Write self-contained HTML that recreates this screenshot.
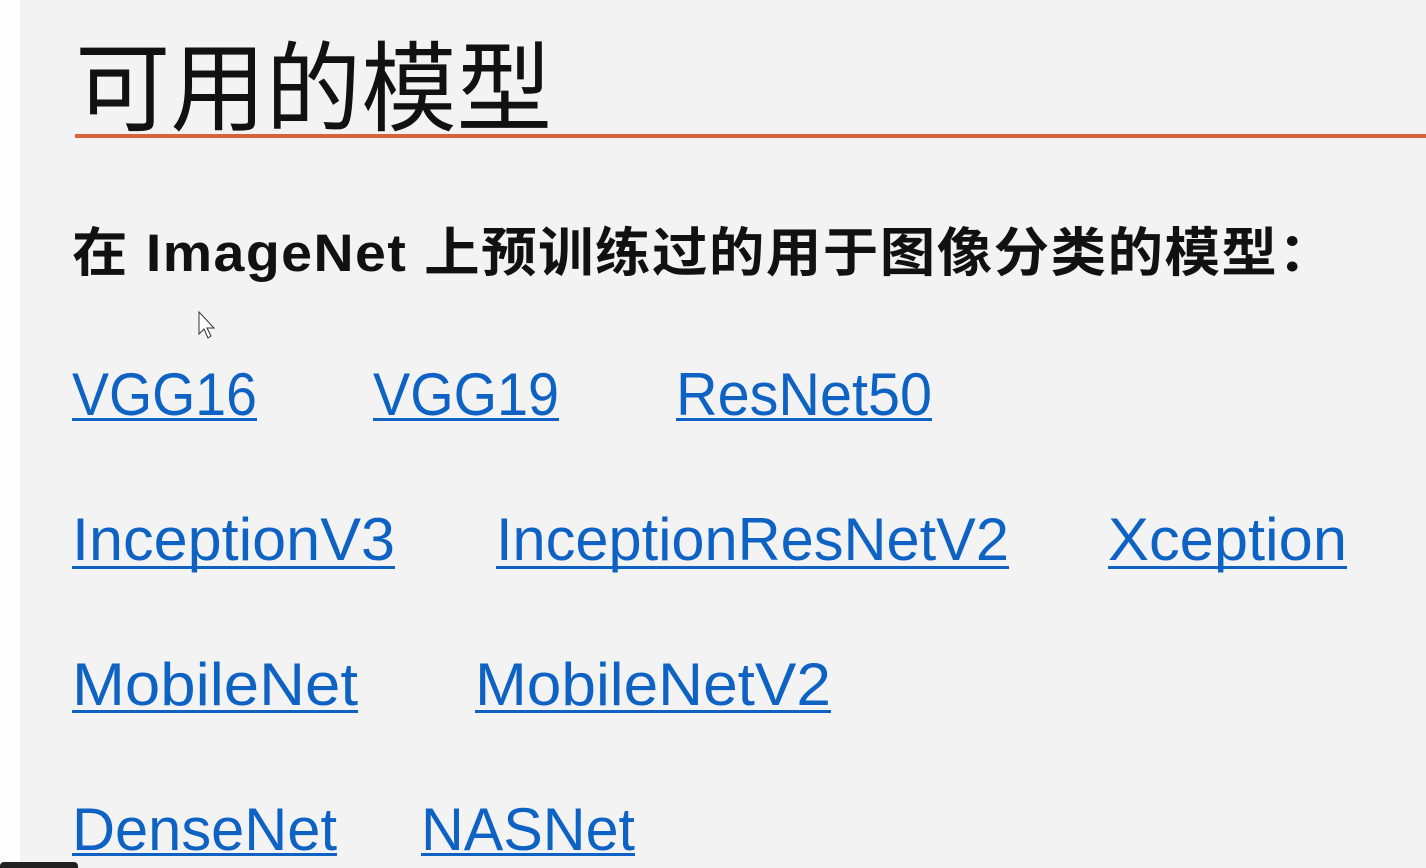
<!DOCTYPE html>
<html><head><meta charset="utf-8"><style>
html,body{margin:0;padding:0;width:1426px;height:868px;overflow:hidden;background:#f3f3f3}
svg{display:block}
</style></head><body>
<svg width="1426" height="868" xmlns="http://www.w3.org/2000/svg">
<rect x="0" y="0" width="20" height="868" fill="#fdfdfd"/>
<text x="75" y="123" font-family="Noto Sans CJK SC, sans-serif" font-weight="400" font-size="98" fill="#111" textLength="477" lengthAdjust="spacingAndGlyphs">可用的模型</text>
<rect x="75" y="134" width="1351" height="4" fill="#d9623e"/>
<g transform="translate(72,0) scale(1.047,1) translate(-72,0)">
<text x="72" y="271" font-family="Liberation Sans, Noto Sans CJK SC, sans-serif" font-weight="bold" font-size="53" fill="#111" letter-spacing="1.4">在 ImageNet 上预训练过的用于图像分类的模型：</text>
</g>
<g font-family="Liberation Sans, sans-serif" font-size="60" fill="#0e62c4">
<text x="72" y="415" textLength="185" lengthAdjust="spacingAndGlyphs">VGG16</text>
<text x="373" y="415" textLength="186" lengthAdjust="spacingAndGlyphs">VGG19</text>
<text x="676" y="415" textLength="256" lengthAdjust="spacingAndGlyphs">ResNet50</text>
<text x="72" y="560" textLength="323" lengthAdjust="spacingAndGlyphs">InceptionV3</text>
<text x="496" y="560" textLength="513" lengthAdjust="spacingAndGlyphs">InceptionResNetV2</text>
<text x="1108" y="560" textLength="239" lengthAdjust="spacingAndGlyphs">Xception</text>
<text x="72" y="705" textLength="286" lengthAdjust="spacingAndGlyphs">MobileNet</text>
<text x="475" y="705" textLength="356" lengthAdjust="spacingAndGlyphs">MobileNetV2</text>
<text x="72" y="850" textLength="265" lengthAdjust="spacingAndGlyphs">DenseNet</text>
<text x="421" y="850" textLength="214" lengthAdjust="spacingAndGlyphs">NASNet</text>
</g>
<g fill="#0e62c4">
<rect x="72" y="418" width="185" height="3"/>
<rect x="373" y="418" width="186" height="3"/>
<rect x="676" y="418" width="256" height="3"/>
<rect x="72" y="566" width="323" height="3"/>
<rect x="496" y="566" width="513" height="3"/>
<rect x="1108" y="566" width="239" height="3"/>
<rect x="72" y="710" width="286" height="3"/>
<rect x="475" y="710" width="356" height="3"/>
<rect x="72" y="853" width="265" height="3"/>
<rect x="421" y="853" width="214" height="3"/>
</g>
<path d="M199 312 L199 334 L204 329 L208 338 L211 336 L207 328 L214 328 Z" fill="#fff" stroke="#333" stroke-width="1"/>
<rect x="0" y="862" width="78" height="10" rx="4" fill="#222"/>
</svg>
</body></html>
